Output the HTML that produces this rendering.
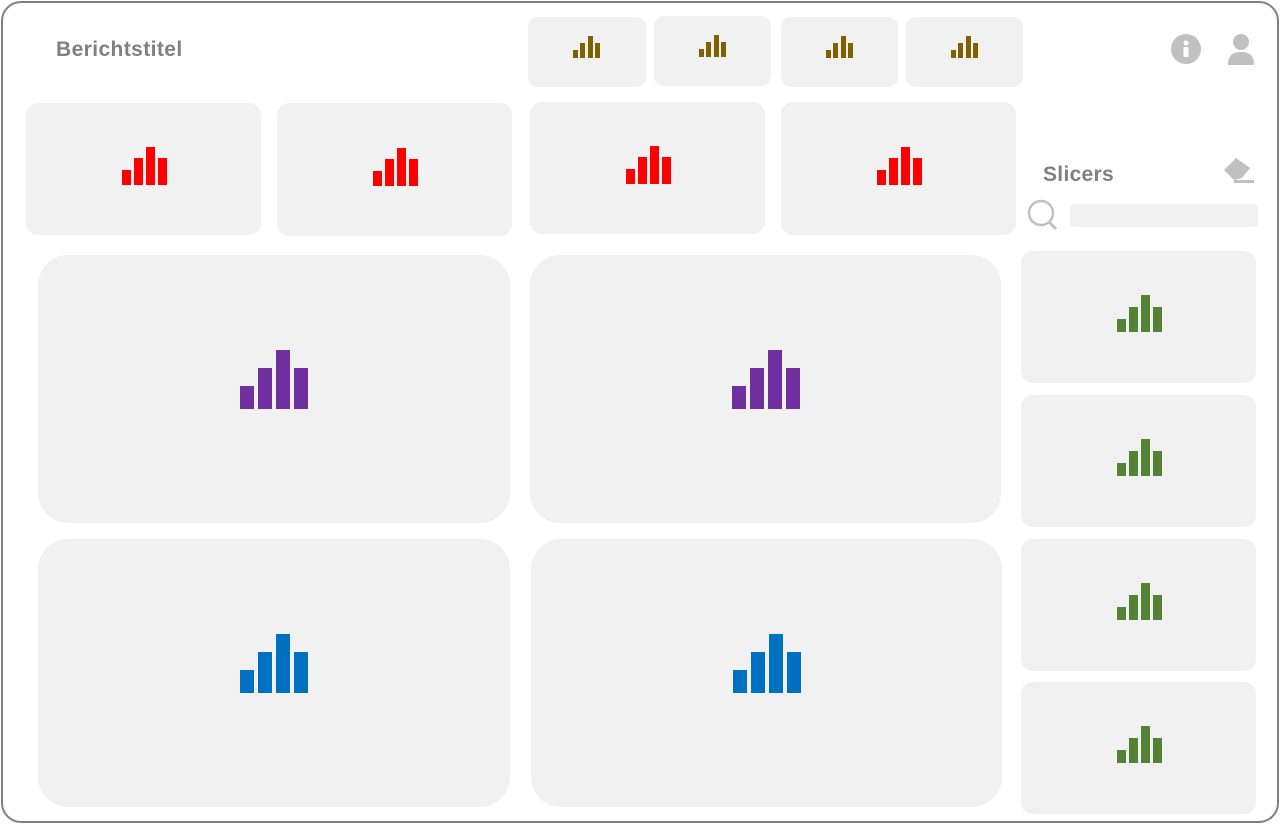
<!DOCTYPE html>
<html><head><meta charset="utf-8"><style>
*{margin:0;padding:0;box-sizing:border-box}
body{width:1280px;height:824px;background:#fff;position:relative;overflow:hidden;font-family:"Liberation Sans",sans-serif}
.frame{position:absolute;left:1px;top:1px;width:1278px;height:822px;border:2px solid #808080;border-radius:20px}
.c{position:absolute;background:#f1f1f1}
.c svg{position:absolute;left:50%;top:50%}
.t{position:absolute;color:#808080;font-size:21px;font-weight:bold;letter-spacing:0.4px}
.s svg{margin:-16px 0 0 -14px !important}
</style></head><body>
<div class="frame"></div>
<div class="t" style="left:56px;top:38px;">Berichtstitel</div>
<div class="t" style="left:1043px;top:163px;letter-spacing:0.3px">Slicers</div>

<!-- top small -->
<div class="c s" style="left:528px;top:17px;width:118px;height:70px;border-radius:10px"><svg width="28" height="22" fill="#806000"><rect x="0" y="14" width="5" height="8"/><rect x="7" y="7" width="5" height="15"/><rect x="15" y="0" width="5" height="22"/><rect x="22" y="7" width="5" height="15"/></svg></div>
<div class="c s" style="left:654px;top:16px;width:117px;height:70px;border-radius:10px"><svg width="28" height="22" fill="#806000"><rect x="0" y="14" width="5" height="8"/><rect x="7" y="7" width="5" height="15"/><rect x="15" y="0" width="5" height="22"/><rect x="22" y="7" width="5" height="15"/></svg></div>
<div class="c s" style="left:781px;top:17px;width:117px;height:70px;border-radius:10px"><svg width="28" height="22" fill="#806000"><rect x="0" y="14" width="5" height="8"/><rect x="7" y="7" width="5" height="15"/><rect x="15" y="0" width="5" height="22"/><rect x="22" y="7" width="5" height="15"/></svg></div>
<div class="c s" style="left:906px;top:17px;width:117px;height:70px;border-radius:10px"><svg width="28" height="22" fill="#806000"><rect x="0" y="14" width="5" height="8"/><rect x="7" y="7" width="5" height="15"/><rect x="15" y="0" width="5" height="22"/><rect x="22" y="7" width="5" height="15"/></svg></div>

<!-- red -->
<div class="c" style="left:26px;top:103px;width:235px;height:132px;border-radius:12px"><svg width="45" height="38" style="margin:-22px 0 0 -22px" fill="#f00"><rect x="0" y="23" width="9" height="15"/><rect x="12" y="11" width="9" height="27"/><rect x="24" y="0" width="9" height="38"/><rect x="36" y="11" width="9" height="27"/></svg></div>
<div class="c" style="left:277px;top:103px;width:235px;height:133px;border-radius:12px"><svg width="45" height="38" style="margin:-22px 0 0 -22px" fill="#f00"><rect x="0" y="23" width="9" height="15"/><rect x="12" y="11" width="9" height="27"/><rect x="24" y="0" width="9" height="38"/><rect x="36" y="11" width="9" height="27"/></svg></div>
<div class="c" style="left:530px;top:102px;width:235px;height:132px;border-radius:12px"><svg width="45" height="38" style="margin:-22px 0 0 -22px" fill="#f00"><rect x="0" y="23" width="9" height="15"/><rect x="12" y="11" width="9" height="27"/><rect x="24" y="0" width="9" height="38"/><rect x="36" y="11" width="9" height="27"/></svg></div>
<div class="c" style="left:781px;top:102px;width:235px;height:133px;border-radius:12px"><svg width="45" height="38" style="margin:-22px 0 0 -22px" fill="#f00"><rect x="0" y="23" width="9" height="15"/><rect x="12" y="11" width="9" height="27"/><rect x="24" y="0" width="9" height="38"/><rect x="36" y="11" width="9" height="27"/></svg></div>

<!-- big -->
<div class="c" style="left:38px;top:255px;width:472px;height:268px;border-radius:30px"><svg width="68" height="59" style="margin:-39px 0 0 -34px" fill="#7030a0"><rect x="0" y="36" width="14" height="23"/><rect x="18" y="18" width="14" height="41"/><rect x="36" y="0" width="14" height="59"/><rect x="54" y="18" width="14" height="41"/></svg></div>
<div class="c" style="left:530px;top:255px;width:471px;height:268px;border-radius:30px"><svg width="68" height="59" style="margin:-39px 0 0 -34px" fill="#7030a0"><rect x="0" y="36" width="14" height="23"/><rect x="18" y="18" width="14" height="41"/><rect x="36" y="0" width="14" height="59"/><rect x="54" y="18" width="14" height="41"/></svg></div>
<div class="c" style="left:38px;top:539px;width:472px;height:268px;border-radius:30px"><svg width="68" height="59" style="margin:-39px 0 0 -34px" fill="#0070c0"><rect x="0" y="36" width="14" height="23"/><rect x="18" y="18" width="14" height="41"/><rect x="36" y="0" width="14" height="59"/><rect x="54" y="18" width="14" height="41"/></svg></div>
<div class="c" style="left:531px;top:539px;width:471px;height:268px;border-radius:30px"><svg width="68" height="59" style="margin:-39px 0 0 -34px" fill="#0070c0"><rect x="0" y="36" width="14" height="23"/><rect x="18" y="18" width="14" height="41"/><rect x="36" y="0" width="14" height="59"/><rect x="54" y="18" width="14" height="41"/></svg></div>

<!-- green -->
<div class="c" style="left:1021px;top:251px;width:235px;height:132px;border-radius:12px"><svg width="45" height="37" style="margin:-22px 0 0 -22px" fill="#548235"><rect x="0" y="24" width="9" height="13"/><rect x="12" y="12" width="9" height="25"/><rect x="24" y="0" width="9" height="37"/><rect x="36" y="12" width="9" height="25"/></svg></div>
<div class="c" style="left:1021px;top:395px;width:235px;height:132px;border-radius:12px"><svg width="45" height="37" style="margin:-22px 0 0 -22px" fill="#548235"><rect x="0" y="24" width="9" height="13"/><rect x="12" y="12" width="9" height="25"/><rect x="24" y="0" width="9" height="37"/><rect x="36" y="12" width="9" height="25"/></svg></div>
<div class="c" style="left:1021px;top:539px;width:235px;height:132px;border-radius:12px"><svg width="45" height="37" style="margin:-22px 0 0 -22px" fill="#548235"><rect x="0" y="24" width="9" height="13"/><rect x="12" y="12" width="9" height="25"/><rect x="24" y="0" width="9" height="37"/><rect x="36" y="12" width="9" height="25"/></svg></div>
<div class="c" style="left:1021px;top:682px;width:235px;height:132px;border-radius:12px"><svg width="45" height="37" style="margin:-22px 0 0 -22px" fill="#548235"><rect x="0" y="24" width="9" height="13"/><rect x="12" y="12" width="9" height="25"/><rect x="24" y="0" width="9" height="37"/><rect x="36" y="12" width="9" height="25"/></svg></div>

<!-- search -->
<div class="c" style="left:1070px;top:204px;width:188px;height:23px;border-radius:4px"></div>
<svg style="position:absolute;left:1026px;top:199px" width="34" height="34"><circle cx="15" cy="14" r="12" fill="none" stroke="#c0c0c0" stroke-width="2.5"/><line x1="23" y1="23" x2="30" y2="30" stroke="#c0c0c0" stroke-width="3"/></svg>
<!-- eraser -->
<svg style="position:absolute;left:1222px;top:154px" width="34" height="32"><path d="M2 16 L14 4 L28 14 L20 24 L12 26 Z" fill="#c0c0c0"/><rect x="12" y="26" width="20" height="3" fill="#c0c0c0"/></svg>
<!-- info -->
<svg style="position:absolute;left:1171px;top:34px" width="32" height="32"><circle cx="15" cy="15" r="15" fill="#c0c0c0"/><circle cx="15" cy="9" r="2.5" fill="#fff"/><rect x="12.5" y="13" width="5" height="10" rx="1" fill="#fff"/></svg>
<!-- user -->
<svg style="position:absolute;left:1227px;top:33px" width="28" height="34"><circle cx="14" cy="9" r="8" fill="#c0c0c0"/><path d="M1 32 C1 22 6 19 14 19 C22 19 27 22 27 32 Z" fill="#c0c0c0"/></svg>
</body></html>
